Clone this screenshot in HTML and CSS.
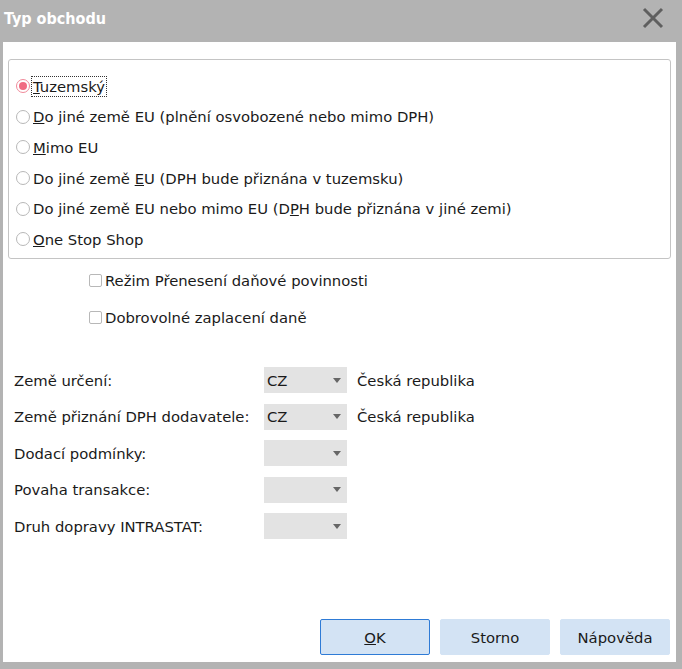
FILE: index.html
```html
<!DOCTYPE html>
<html lang="cs">
<head>
  <meta charset="UTF-8" />
  <title>Typ obchodu</title>
  <link rel="stylesheet" href="styles.css">
</head>
<body>
  <div class="dialog">
    <div class="titlebar">
      <span class="title">Typ obchodu</span>
      <svg class="close" width="22" height="22" viewBox="0 0 22 22">
        <path d="M2 2 L20 20 M20 2 L2 20" stroke="#5f5f5f" stroke-width="3" />
      </svg>
    </div>

    <div class="content">
      <div class="group">
        <label class="radio"><span class="dot checked"></span><span class="focus"><u>T</u>uzemský</span></label>
        <label class="radio"><span class="dot"></span><span><u>D</u>o jiné země EU (plnění osvobozené nebo mimo DPH)</span></label>
        <label class="radio"><span class="dot"></span><span><u>M</u>imo EU</span></label>
        <label class="radio"><span class="dot"></span><span>Do jiné země <u>E</u>U (DPH bude přiznána v tuzemsku)</span></label>
        <label class="radio"><span class="dot"></span><span>Do jiné země EU nebo mimo EU (D<u>P</u>H bude přiznána v jiné zemi)</span></label>
        <label class="radio"><span class="dot"></span><span><u>O</u>ne Stop Shop</span></label>
      </div>

      <div class="checks">
        <label class="check"><span class="box"></span>Režim Přenesení daňové povinnosti</label>
        <label class="check"><span class="box"></span>Dobrovolné zaplacení daně</label>
      </div>

      <div class="fields">
        <div class="field">
          <span class="label">Země určení:</span>
          <span class="select"><span class="value">CZ</span><span class="arrow"></span></span>
          <span class="name">Česká republika</span>
        </div>
        <div class="field">
          <span class="label">Země přiznání DPH dodavatele:</span>
          <span class="select"><span class="value">CZ</span><span class="arrow"></span></span>
          <span class="name">Česká republika</span>
        </div>
        <div class="field">
          <span class="label">Dodací podmínky:</span>
          <span class="select"><span class="value"></span><span class="arrow"></span></span>
        </div>
        <div class="field">
          <span class="label">Povaha transakce:</span>
          <span class="select"><span class="value"></span><span class="arrow"></span></span>
        </div>
        <div class="field">
          <span class="label">Druh dopravy INTRASTAT:</span>
          <span class="select"><span class="value"></span><span class="arrow"></span></span>
        </div>
      </div>

      <div class="buttons">
        <button class="btn default"><u>O</u>K</button>
        <button class="btn">Storno</button>
        <button class="btn">Nápověda</button>
      </div>
    </div>
  </div>
</body>
</html>
```

FILE: styles.css
```css
html, body {
  margin: 0;
  padding: 0;
}

body {
  background-color: #b3b3b3;
  font-family: "DejaVu Sans", sans-serif;
  font-size: 14.8px;
  color: #1a1a1a;
}

.dialog {
  width: 682px;
  height: 669px;
  display: flex;
  flex-direction: column;
}

.titlebar {
  height: 42px;
  display: flex;
  align-items: center;
  justify-content: space-between;
  padding: 0 18px 0 4px;
  box-sizing: border-box;
}

.title {
  color: #fff;
  font-family: "DejaVu Sans Condensed", "DejaVu Sans", sans-serif;
  font-weight: bold;
  font-size: 16px;
  margin-top: -6px;
}

.close {
  margin-top: -6px;
}

.content {
  background-color: #fff;
  margin: 0 6px 7px 3px;
  flex: 1;
  display: flex;
  flex-direction: column;
  padding: 17px 5px 0 5px;
}

/* skupina přepínačů */
.group {
  border: 1px solid #c4c4c4;
  border-radius: 3px;
  height: 200px;
  box-sizing: border-box;
  padding: 11px 0 0 7px;
}

.radio {
  display: flex;
  align-items: center;
  height: 30.6px;
}

.dot {
  width: 14px;
  height: 14px;
  border: 1px solid #b8b8b8;
  border-radius: 50%;
  box-sizing: border-box;
  margin-right: 3px;
  position: relative;
}

.dot.checked {
  border-color: #f08a9a;
}

.dot.checked::after {
  content: "";
  position: absolute;
  left: 2px;
  top: 2px;
  width: 8px;
  height: 8px;
  border-radius: 50%;
  background-color: #f06b82;
}

.focus {
  outline: 1px dotted #333;
  padding: 1px 1px;
  margin-left: -1px;
}

.checks {
  padding: 3px 0 0 81px;
}

.check {
  display: flex;
  align-items: center;
  height: 37px;
}

.box {
  width: 13px;
  height: 13px;
  border: 1px solid #b8b8b8;
  border-radius: 2px;
  box-sizing: border-box;
  margin-right: 3px;
}

.fields {
  padding: 26px 0 0 6px;
}

.field {
  display: flex;
  align-items: center;
  height: 36.5px;
}

.label {
  width: 250px;
}

.select {
  width: 83px;
  height: 26px;
  background-color: #e3e3e3;
  display: flex;
  align-items: center;
  justify-content: space-between;
  padding: 0 6px 0 3px;
  box-sizing: border-box;
}

.arrow {
  width: 0;
  height: 0;
  border-left: 4px solid transparent;
  border-right: 4px solid transparent;
  border-top: 5px solid #666;
}

.name {
  margin-left: 10px;
}

.buttons {
  margin-top: auto;
  margin-bottom: 7px;
  display: flex;
  justify-content: flex-end;
  gap: 10px;
  padding-right: 1px;
}

.btn {
  width: 110px;
  height: 36px;
  background-color: #d3e3f4;
  border: 1px solid #d3e3f4;
  border-radius: 2px;
  font-family: inherit;
  font-size: 14.8px;
  color: #1a1a1a;
}

.btn.default {
  border-color: #2e7bd6;
}
```
